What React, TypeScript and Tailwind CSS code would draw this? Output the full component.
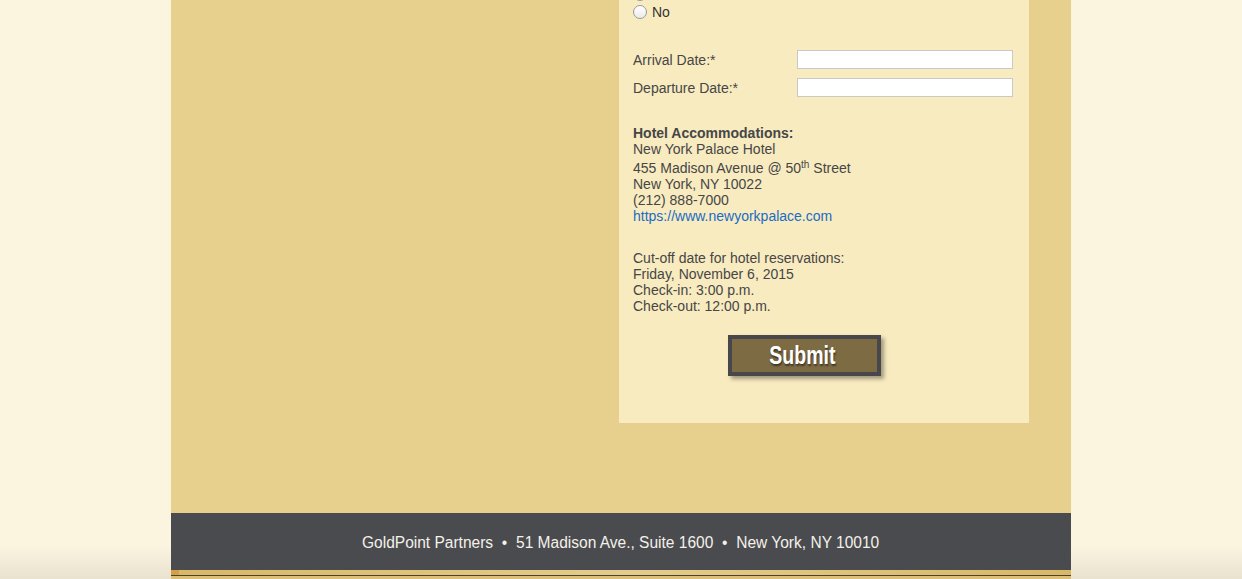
import React from "react";

const Radio = () => (
  <span className="inline-block w-[14px] h-[14px] rounded-full border border-[#9a9a9a] bg-[linear-gradient(to_bottom,#ffffff,#ececec)] shrink-0" />
);

export default function App() {
  return (
    <div
      className="h-screen overflow-hidden flex justify-center bg-[linear-gradient(to_bottom,#fbf5e0_545px,#e8e2cf)] text-[#464646]"
      style={{ fontFamily: '"Liberation Sans", Arial, sans-serif' }}
    >
      <div className="w-[900px] h-full flex flex-col bg-[#e7d08e]">
        <div className="flex-1 overflow-hidden">
          <div className="ml-[448px] w-[410px] -mt-[15px] bg-[#f8ebc0] pl-[14px] pr-[16px] pb-[47px] text-[14px] leading-[16px]">
            <div className="flex items-center gap-[5px] h-[18px]">
              <Radio />
            </div>
            <div className="flex items-center gap-[5px] h-[18px]">
              <Radio />
              <span className="text-[#333]">No</span>
            </div>
            <div className="mt-[29px] flex flex-col gap-[9px]">
              <div className="flex items-center h-[19px]">
                <span className="w-[164px]">Arrival Date:*</span>
                <input className="w-[216px] h-[19px] bg-white border border-[#c9c9c9] outline-none" />
              </div>
              <div className="flex items-center h-[19px]">
                <span className="w-[164px]">Departure Date:*</span>
                <input className="w-[216px] h-[19px] bg-white border border-[#c9c9c9] outline-none" />
              </div>
            </div>
            <div className="mt-[28px]">
              <div className="font-bold">Hotel Accommodations:</div>
              <div>New York Palace Hotel</div>
              <div className="pt-[3px]">
                455 Madison Avenue @ 50
                <sup className="text-[10px] relative -top-[5px]">th</sup> Street
              </div>
              <div>New York, NY 10022</div>
              <div>(212) 888-7000</div>
              <div className="text-[#1a6cc4]">https://www.newyorkpalace.com</div>
            </div>
            <div className="mt-[26px]">
              <div>Cut-off date for hotel reservations:</div>
              <div>Friday, November 6, 2015</div>
              <div>Check-in: 3:00 p.m.</div>
              <div>Check-out: 12:00 p.m.</div>
            </div>
            <div className="mt-[21px] ml-[95px]">
              <button className="w-[153px] h-[41px] border-[4px] border-[#48484c] bg-[#7d6b44] shadow-[3px_3px_4px_rgba(0,0,0,0.35)] flex items-center justify-center pr-[4px]">
                <span
                  className="text-white font-bold text-[25px] leading-none [text-shadow:1px_2px_2px_rgba(0,0,0,0.5)] inline-block scale-x-[0.78]"
                  style={{ fontFamily: '"Liberation Sans Narrow", "Liberation Sans", Arial, sans-serif' }}
                >
                  Submit
                </span>
              </button>
            </div>
          </div>
        </div>
        <footer className="h-[57px] bg-[#4a4b4f] flex items-center justify-center pt-[2px]">
          <span
            className="text-[#f4f1ea] text-[16px] inline-block scale-x-[0.97] whitespace-nowrap"
            style={{ fontFamily: '"Liberation Sans Narrow", "Liberation Sans", Arial, sans-serif' }}
          >
            GoldPoint Partners<span className="mx-[9px]">•</span>51 Madison Ave., Suite 1600<span className="mx-[9px]">•</span>New York, NY 10010
          </span>
        </footer>
        <div className="h-[5px] flex">
          <div className="w-[8px] bg-[#d49f45]" />
          <div className="flex-1 bg-[linear-gradient(to_right,#d9b865,#e3cc8c,#d9b865)]" />
        </div>
        <div className="h-px bg-[#4d4232]" />
        <div className="h-[3px] bg-[#dcc079]" />
      </div>
    </div>
  );
}
